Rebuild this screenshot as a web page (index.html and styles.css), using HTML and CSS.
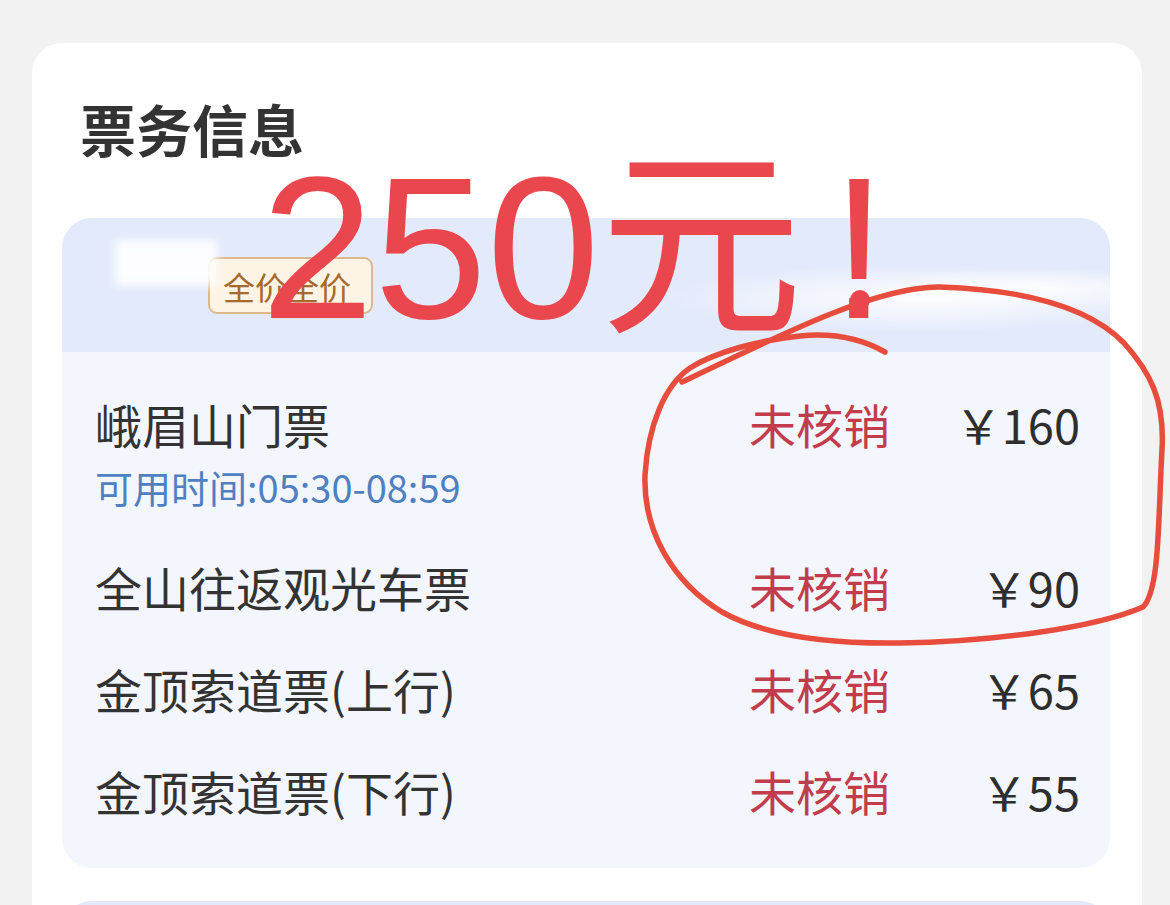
FILE: index.html
```html
<!DOCTYPE html>
<html lang="zh">
<head>
<meta charset="utf-8">
<link rel="stylesheet" href="styles.css">
</head>
<body>
<div class="page">
  <section class="card">
    <h1 class="title">票务信息</h1>
    <div class="panel">
      <div class="panel-head">
        <div class="smear"></div>
        <div class="tag">全价全价</div>
      </div>
      <div class="items">
        <div class="item">
          <div class="name">峨眉山门票</div>
          <div class="status">未核销</div>
          <div class="price">￥160</div>
          <div class="sub">可用时间:05:30-08:59</div>
        </div>
        <div class="item">
          <div class="name">全山往返观光车票</div>
          <div class="status">未核销</div>
          <div class="price">￥90</div>
        </div>
        <div class="item">
          <div class="name">金顶索道票(上行)</div>
          <div class="status">未核销</div>
          <div class="price">￥65</div>
        </div>
        <div class="item">
          <div class="name">金顶索道票(下行)</div>
          <div class="status">未核销</div>
          <div class="price">￥55</div>
        </div>
      </div>
    </div>
    <div class="panel next"></div>
    <div class="shout">250元<span class="bang">!</span></div>
  </section>
  <svg class="scribble" width="1170" height="905" viewBox="0 0 1170 905">
    <path d="M885,352 C860,338 830,333 800,336 C760,340 715,352 690,368 C665,385 648,425 645,475 C643,530 672,582 722,612 C765,636 830,644 900,643 C990,642 1095,628 1143,607 C1160,590 1158,520 1162,450 C1165,400 1150,372 1124,343 C1090,308 1030,290 940,287 C880,286 790,330 682,382" fill="none" stroke="#e84c3d" stroke-width="5.5" stroke-linecap="round" stroke-linejoin="round"/>
    <circle cx="860" cy="300" r="10" fill="#e9474d"/>
  </svg>
</div>
</body>
</html>
```
FILE: styles.css
```css
* { box-sizing: border-box; }
html, body { margin: 0; padding: 0; }
body {
  background: #f2f2f2;
  font-family: "Noto Sans CJK SC", "Noto Sans", sans-serif;
  color: #333;
  width: 1170px;
  height: 905px;
  overflow: hidden;
}
.page {
  position: relative;
  width: 1170px;
  height: 905px;
  padding: 43px 28px 0 32px;
}
.card {
  position: relative;
  background: #fff;
  border-radius: 30px 30px 0 0;
  padding: 50px 32px 0 30px;
  height: 862px;
  overflow: hidden;
}
.title {
  margin: 0 0 55px 18px;
  font-size: 56px;
  line-height: 70px;
  font-weight: 700;
  color: #333;
}
.panel {
  border-radius: 30px;
  overflow: hidden;
  background: #f3f6fd;
}
.panel-head {
  height: 134px;
  display: flex;
  align-items: flex-start;
  padding-left: 53px;
  background:
    radial-gradient(ellipse 260px 34px at 860px 80px, rgba(255,255,255,0.95), rgba(255,255,255,0) 100%),
    radial-gradient(ellipse 160px 20px at 980px 70px, rgba(255,255,255,0.8), rgba(255,255,255,0) 100%),
    #e3eafb;
}
.smear {
  position: relative;
  z-index: 1;
  width: 102px;
  height: 46px;
  margin-top: 22px;
  background: rgba(255,255,255,0.9);
  filter: blur(5px);
}
.tag {
  margin-top: 39px;
  margin-left: -9px;
  height: 57px;
  padding: 0 20px 0 13px;
  display: flex;
  align-items: center;
  background: #fdf4e5;
  border: 2px solid #dcb98c;
  border-radius: 9px;
  color: #a8692d;
  font-size: 32px;
}
.items {
  display: flex;
  flex-direction: column;
  gap: 42px;
  padding: 42px 30px 47px 33px;
}
.item {
  display: grid;
  grid-template-columns: 1fr auto 190px;
  align-items: center;
}
.name, .status, .price {
  font-size: 47px;
  line-height: 60px;
  white-space: nowrap;
}
.name { color: #333; }
.status { color: #c23c4b; }
.price { color: #2e2e2e; text-align: right; }
.sub {
  grid-column: 1 / -1;
  margin-top: 11px;
  padding-bottom: 6px;
  font-size: 38px;
  line-height: 44px;
  color: #4f80c2;
}
.next {
  margin-top: 33px;
  height: 60px;
  background: #e3eafb;
}
.shout {
  position: absolute;
  left: 229px;
  top: 103px;
  font-family: "Liberation Sans", "Noto Sans CJK SC", sans-serif;
  font-size: 203px;
  line-height: 203px;
  color: #e9474d;
  white-space: nowrap;
}
.bang { margin-left: 28px; }
.scribble {
  position: absolute;
  left: 0;
  top: 0;
  pointer-events: none;
}
```
